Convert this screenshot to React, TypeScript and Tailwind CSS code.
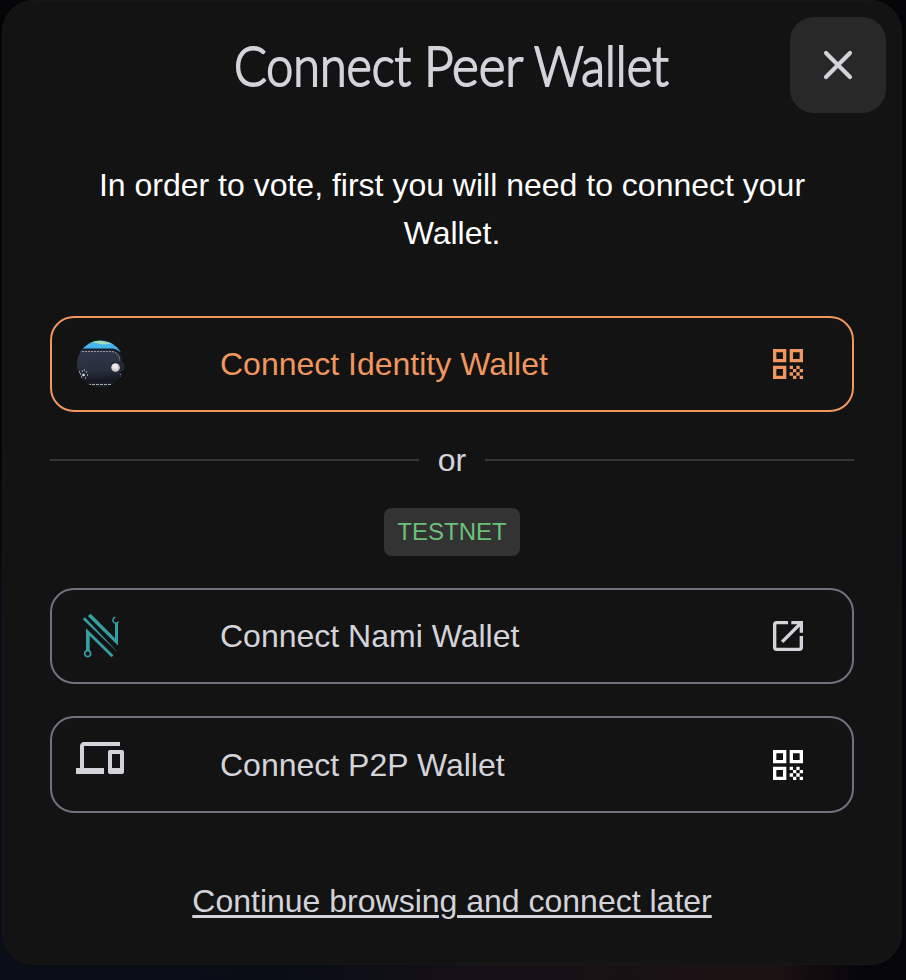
import React from "react";

function QrIcon() {
  return (
    <svg className="size-10 shrink-0" viewBox="0 0 24 24" fill="currentColor">
      <path d="M3 11h8V3H3zm2-6h4v4H5zM3 21h8v-8H3zm2-6h4v4H5zM13 3v8h8V3zm6 6h-4V5h4zM19 19h2v2h-2zM13 13h2v2h-2zM15 15h2v2h-2zM13 17h2v2h-2zM15 19h2v2h-2zM17 17h2v2h-2zM17 13h2v2h-2zM19 15h2v2h-2z" />
    </svg>
  );
}

function LaunchIcon() {
  return (
    <svg className="size-10 shrink-0" viewBox="0 0 24 24" fill="currentColor">
      <path d="M19 19H5V5h7V3H5c-1.11 0-2 .9-2 2v14c0 1.1.89 2 2 2h14c1.1 0 2-.9 2-2v-7h-2v7zM14 3v2h3.59l-9.83 9.83 1.41 1.41L19 6.41V10h2V3h-7z" />
    </svg>
  );
}

function DevicesIcon() {
  return (
    <svg className="mb-[13px] size-12" viewBox="0 0 24 24" fill="currentColor">
      <path d="M4 6h18V4H4c-1.1 0-2 .9-2 2v11H0v3h14v-3H4V6zm19 2h-6c-.55 0-1 .45-1 1v10c0 .55.45 1 1 1h6c.55 0 1-.45 1-1V9c0-.55-.45-1-1-1zm-1 9h-4v-7h4v7z" />
    </svg>
  );
}

function IdentityIcon() {
  return (
    <svg className="size-12" viewBox="0 0 48 48">
      <defs>
        <clipPath id="disc"><circle cx="24.500" cy="24" r="23.500" /></clipPath>
        <linearGradient id="leather" x1="0.200" y1="0" x2="0.300" y2="1">
          <stop offset="0" stopColor="#303749" />
          <stop offset="0.650" stopColor="#282e3d" />
          <stop offset="1" stopColor="#141720" />
        </linearGradient>
      </defs>
      <g clipPath="url(#disc)">
        <path d="M0 0h48v12H0z" fill="#45b5ec" />
        <path d="M15 1q10-2 21 3l-4 0q-5 1-8 0-3-1-9-2z" fill="#a3dbb5" />
        <path d="M0 8.500h37q8 1 9 9v21l-4 9H0V9z" fill="#1a1f2b" />
        <path d="M1 10.500h35q7 2 8 9v17q-2 6-7 6H1z" fill="url(#leather)" />
        <path d="M3 11.500h33q7 1 8 9" fill="none" stroke="#9a9da5" strokeDasharray="2 1" strokeWidth="1" />
        <path d="M12 44.500h26" stroke="#a5a7ad" strokeDasharray="3 1" strokeWidth="1" />
        <path d="M44.500 34v5" stroke="#898c96" strokeDasharray="1 1" />
      </g>
      <path d="M38 22h9q1 0 1 2v6q0 1-2 1h-8q-3 0-3-4.500T38 22z" fill="#222836" />
      <circle cx="39.500" cy="27.500" r="4.300" fill="#d0cecd" />
      <circle cx="39" cy="26.500" r="2.800" fill="#eceae8" />
      <circle cx="7.500" cy="35" r="1.300" fill="#e4e5e8" />
      <path d="M4 34h1M6 31h1M10 32h1M11 35h1M9 38h1M5 37h1M8 30h1M3 32h1" stroke="#eceef1" strokeWidth="1.100" />
    </svg>
  );
}

function NamiIcon() {
  return (
    <svg className="size-12" viewBox="0 0 48 48" fill="none" stroke="#349ea3">
      <g fill="#349ea3" stroke="none">
        <path d="M11.700 4 14.700 1.700 39 26.300V10.700h3V33.500z" />
        <path d="M10 39V16.300L37.500 43.300 35.500 45.200 13.700 23.700V39z" />
        <path d="M6.700 7.200 8.900 5.200 42.500 41z" />
      </g>
      <circle cx="11.700" cy="41.600" r="3" strokeWidth="1.600" fill="#131313" />
      <path d="M39.300 5.300a3 3 0 1 0 3.300 4.200" strokeWidth="1.500" />
    </svg>
  );
}

type WalletProps = {
  label: string;
  left: React.ReactNode;
  right: React.ReactNode;
  className: string;
};

function WalletButton({ label, left, right, className }: WalletProps) {
  return (
    <button className={`flex w-full items-center rounded-3xl border-2 pr-11 pl-6 text-left text-[32px] leading-10 ${className}`}>
      <span className="flex h-full w-[144px] shrink-0 items-center">{left}</span>
      <span className="grow">{label}</span>
      {right}
    </button>
  );
}

export default function App() {
  return (
    <div className="h-[980px] w-[906px] overflow-hidden bg-[linear-gradient(90deg,#0a0e18_0%,#080d16_30%,#151116_52%,#1b1112_86%,#05050a_96%)] font-['Liberation_Sans',Arial,sans-serif]">
      <div className="h-full bg-[linear-gradient(180deg,#050507_0%,#050507_45%,transparent_65%)] pl-0.5">
        <main className="flex h-[965px] w-[900px] flex-col rounded-[32px] bg-[#131313] px-12 text-[#d4d3da] shadow-[inset_0_0_0_1px_#171717]">
          <header className="-mr-8 flex h-[113px] items-start justify-end pt-[17px]">
            <h1 className="flex h-24 grow pt-[10px] pl-[184px] font-['Lato',sans-serif] text-[55px] leading-[76px] font-light whitespace-nowrap [-webkit-text-stroke:2px_#d4d3da] [paint-order:stroke_fill] [stroke-linejoin:round]">
              <span className="w-[190px]"><span className="inline-block origin-left scale-x-[.88]">Connect</span></span>
              <span className="w-[110px]"><span className="inline-block origin-left scale-x-[.93]">Peer</span></span>
              <span className="w-[140px]"><span className="inline-block origin-left scale-x-[.89]">Wallet</span></span>
            </h1>
            <button aria-label="Close" className="flex size-24 shrink-0 items-center justify-center rounded-3xl bg-[#282828]">
              <svg className="size-8" viewBox="0 0 32 32" fill="none" stroke="currentColor" strokeWidth="4.200" strokeLinecap="round">
                <path d="m4 4 24 24M28 4 4 28" />
              </svg>
            </button>
          </header>
          <p className="mt-12 h-24 text-center text-[32px] leading-[48px] text-white">
            In order to vote, first you will need to connect your
            <br />
            Wallet.
          </p>
          <WalletButton className="mt-[59px] h-24 border-[#f0965f] text-[#f0965f]" label="Connect Identity Wallet" left={<IdentityIcon />} right={<QrIcon />} />
          <div className="flex h-24 items-center gap-[19px] text-[32px]">
            <span className="h-0.5 grow bg-[#373737]" />
            <span>or</span>
            <span className="h-0.5 grow bg-[#373737]" />
          </div>
          <span className="flex h-12 w-[136px] items-center justify-center self-center rounded-lg bg-[#333333] text-2xl text-[#6cc07a]">TESTNET</span>
          <WalletButton className="mt-8 h-24 border-[#737080]" label="Connect Nami Wallet" left={<NamiIcon />} right={<LaunchIcon />} />
          <WalletButton className="mt-8 h-[97px] border-[#737080]" label="Connect P2P Wallet" left={<DevicesIcon />} right={<span className="flex text-white"><QrIcon /></span>} />
          <a className="mt-16 self-center text-[32px] leading-12 underline decoration-[3px] underline-offset-[3px]">Continue browsing and connect later</a>
        </main>
      </div>
    </div>
  );
}
